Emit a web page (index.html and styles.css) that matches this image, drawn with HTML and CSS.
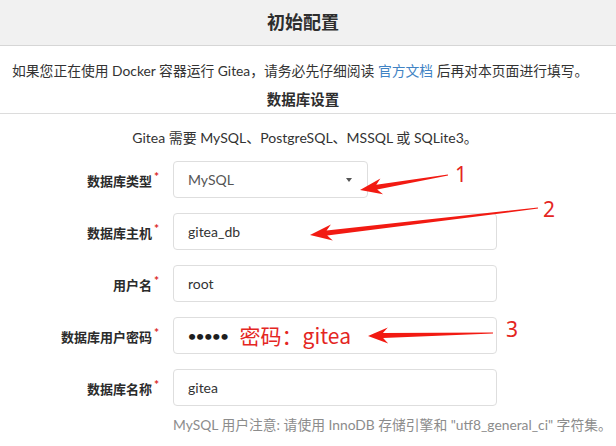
FILE: index.html
```html
<!DOCTYPE html>
<html lang="zh-CN">
<head>
<meta charset="utf-8">
<title>初始配置</title>
<link rel="stylesheet" href="styles.css">
</head>
<body>
<div class="page">
  <h2 class="title">初始配置</h2>
  <div class="content">
    <p class="notice">如果您正在使用 Docker 容器运行 Gitea，请务必先仔细阅读 <a href="#" class="link">官方文档</a> 后再对本页面进行填写。</p>
    <h4 class="section">数据库设置</h4>
    <p class="hint">Gitea 需要 MySQL、PostgreSQL、MSSQL 或 SQLite3。</p>
    <div class="fields">
      <div class="field">
        <label class="label">数据库类型<span class="req">*</span></label>
        <div class="select">MySQL<span class="caret"></span></div>
      </div>
      <div class="field">
        <label class="label">数据库主机<span class="req">*</span></label>
        <input class="input" type="text" value="gitea_db">
      </div>
      <div class="field">
        <label class="label">用户名<span class="req">*</span></label>
        <input class="input" type="text" value="root">
      </div>
      <div class="field">
        <label class="label">数据库用户密码<span class="req">*</span></label>
        <div class="input pass"><span class="dots">•••••</span><span class="note">密码：gitea</span></div>
      </div>
      <div class="field">
        <label class="label">数据库名称<span class="req">*</span></label>
        <input class="input" type="text" value="gitea">
      </div>
      <div class="field">
        <span class="label"></span>
        <p class="help">MySQL 用户注意: 请使用 InnoDB 存储引擎和 "utf8_general_ci" 字符集。</p>
      </div>
    </div>
  </div>
  <svg class="marks" width="616" height="446" viewBox="0 0 616 446">
    <polygon points="447.9,174.4 376.3,184.7 380.4,178.4 360,190 383,194.2 377.2,189.6 448.1,175.6"/>
    <polygon points="537.9,207.4 326.6,230.5 330.9,224.5 310,235 332.8,240.4 327.2,235.5 538.1,208.6"/>
    <polygon points="493,332.4 382.9,333.1 387.8,327.5 368,336 388.2,343.5 383.1,338.1 493,333.6"/>
    <text x="461" y="182" class="num">1</text>
    <text x="549" y="217" class="num">2</text>
    <text x="512" y="337" class="num">3</text>
  </svg>
</div>
</body>
</html>
```
FILE: styles.css
```css
html, body {
  margin: 0;
  padding: 0;
  background: #ffffff;
}
body {
  font-family: "Lato", "Noto Sans CJK SC", sans-serif;
  color: #333333;
  font-size: 14px;
}
.page {
  position: relative;
  width: 616px;
  height: 446px;
  overflow: hidden;
}
.title {
  margin: 0;
  height: 45px;
  line-height: 45px;
  background: #f1f1f1;
  border-bottom: 1px solid #d6d6d6;
  text-align: center;
  font-size: 18px;
  font-weight: 700;
  padding-right: 10px;
  color: #2e2e2e;
}
.content {
  padding-top: 15px;
}
.notice {
  margin: 0;
  padding-left: 12px;
  line-height: 20px;
  font-size: 13.8px;
  color: #333333;
  white-space: nowrap;
}
.link {
  color: #4183c4;
  text-decoration: none;
}
.section {
  margin: 9px 0 0;
  padding: 0 10px 3px 0;
  line-height: 20px;
  font-size: 14.5px;
  font-weight: 700;
  text-align: center;
  border-bottom: 1px solid #dcdcdc;
  color: #2e2e2e;
}
.hint {
  margin: 14px 0 0;
  line-height: 20px;
  text-align: center;
  padding-right: 6px;
  color: #333333;
}
.fields {
  margin-top: 13px;
  display: flex;
  flex-direction: column;
  gap: 15px;
}
.field {
  display: flex;
  align-items: center;
}
.label {
  width: 159px;
  margin-right: 14px;
  text-align: right;
  font-size: 13px;
  font-weight: 700;
  color: #2b2b2b;
  flex: none;
}
.req {
  color: #db2828;
  font-size: 12px;
  margin-left: 2px;
  vertical-align: 0.4em;
}
.input, .select {
  box-sizing: border-box;
  height: 37px;
  width: 324px;
  padding: 0 14px;
  border: 1px solid #dedede;
  border-radius: 4px;
  background: #ffffff;
  font-family: "Lato", "Noto Sans CJK SC", sans-serif;
  font-size: 14px;
  color: #333333;
  outline: none;
  margin: 0;
}
.select {
  width: 195px;
  display: flex;
  align-items: center;
  justify-content: space-between;
  color: #555555;
}
.caret {
  width: 0;
  height: 0;
  border-left: 3.5px solid transparent;
  border-right: 3.5px solid transparent;
  border-top: 4px solid #555555;
  margin-right: 1px;
}
.pass {
  display: flex;
  align-items: center;
}
.dots {
  font-size: 14px;
  letter-spacing: 0;
  color: #1e1e1e;
  font-weight: 700;
}
.note {
  margin-left: 11px;
  font-size: 21px;
  color: #e4261f;
  font-family: "Noto Sans CJK SC", "Lato", sans-serif;
  line-height: 1;
}
.help {
  margin: -6px 0 0;
  line-height: 20px;
  font-size: 13.8px;
  color: #8c8c8c;
  white-space: nowrap;
}
.marks {
  position: absolute;
  top: 0;
  left: 0;
  pointer-events: none;
}
.marks polygon {
  fill: #f21a12;
}
.num {
  font-family: "Noto Sans", sans-serif;
  font-size: 21px;
  fill: #e4261f;
  text-anchor: middle;
}
```
